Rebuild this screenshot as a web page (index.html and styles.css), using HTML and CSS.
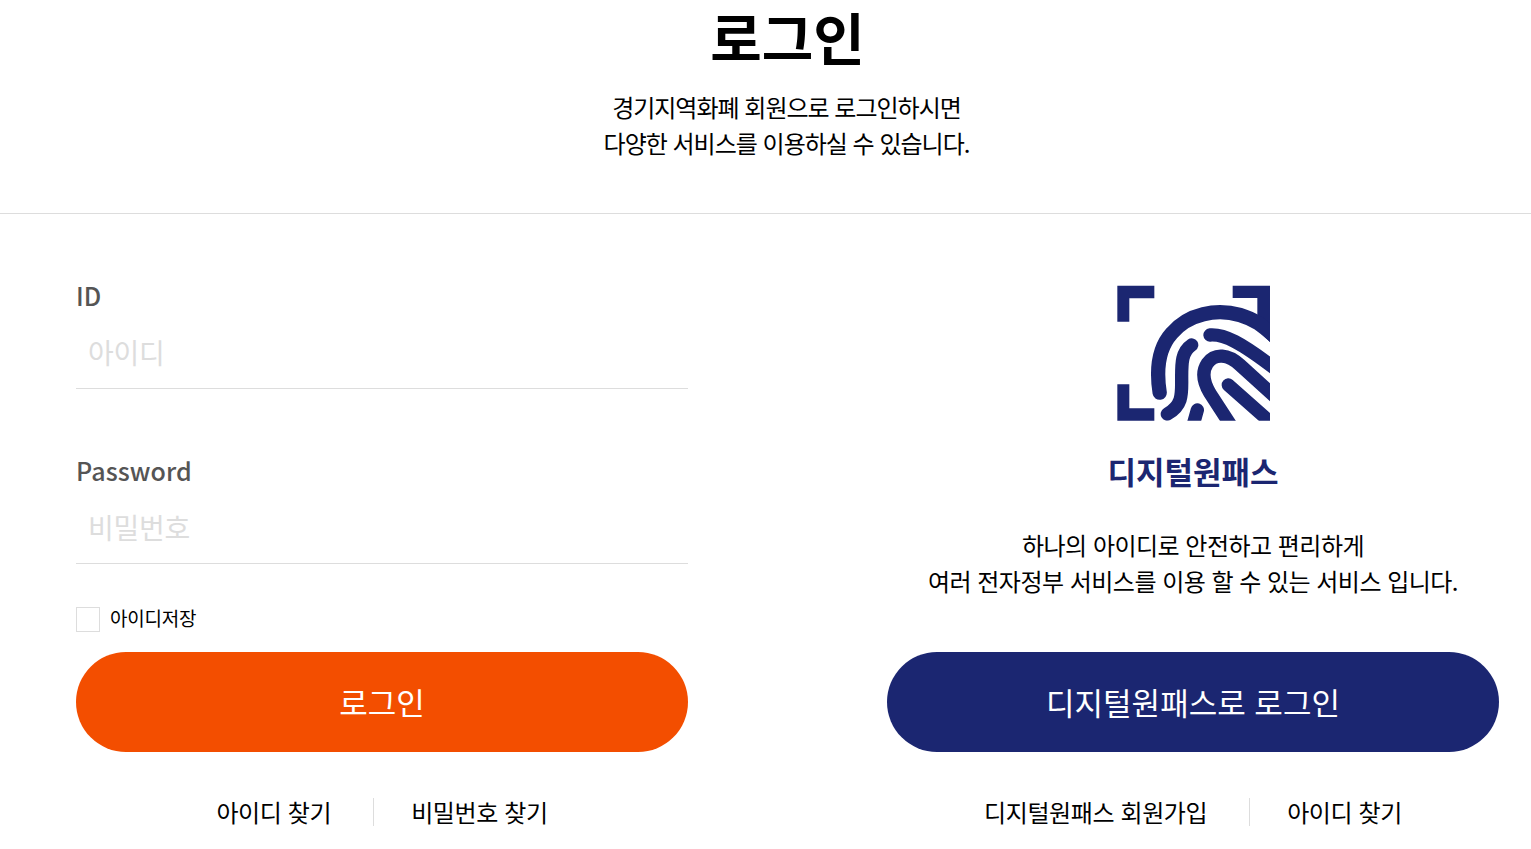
FILE: index.html
```html
<!DOCTYPE html>
<html lang="ko">
<head>
    <meta charset="UTF-8">
    <title>로그인</title>
    <link rel="stylesheet" href="styles.css">
</head>
<body>
    <div class="page">
        <!-- Title -->
        <div class="head">
            <h1>로그인</h1>
            <p>경기지역화폐 회원으로 로그인하시면<br>다양한 서비스를 이용하실 수 있습니다.</p>
        </div>

        <div class="columns">
            <!-- ID login -->
            <div class="col">
                <div class="form-area">
                    <div class="field">
                        <label for="userId">ID</label>
                        <input type="text" id="userId" placeholder="아이디">
                    </div>
                    <div class="field">
                        <label for="userPw">Password</label>
                        <input type="password" id="userPw" placeholder="비밀번호">
                    </div>
                    <label class="save-id">
                        <span class="check"></span>
                        <span class="save-text">아이디저장</span>
                    </label>
                </div>
                <button class="btn btn-orange">로그인</button>
                <div class="links">
                    <a href="#">아이디 찾기</a>
                    <a href="#">비밀번호 찾기</a>
                </div>
            </div>

            <!-- Digital One Pass -->
            <div class="col">
                <div class="form-area center">
                    <svg class="logo" viewBox="0 0 570 495" width="190" height="165">
                        <defs>
                            <clipPath id="logoClip"><rect x="40" y="40" width="470" height="412"/></clipPath>
                        </defs>
                        <g fill="#1b2671">
                            <path d="M52 47H163V85H88V155H52Z"/>
                            <path d="M52 343H88V415H163V452H52Z"/>
                            <path d="M398 47H510V216L472 180V84H398Z"/>
                        </g>
                        <g clip-path="url(#logoClip)" fill="none" stroke="#1b2671" stroke-width="40" stroke-linecap="round">
                            <path stroke-width="43" d="M179 368C170 310 170 240 215 190C265 130 350 115 420 135C470 150 490 170 530 205"/>
                            <path d="M330 195C372 192 420 215 530 300"/>
                            <path d="M275 225C245 245 245 280 245 320C245 370 250 405 202 432"/>
                            <path d="M530 385L420 285C385 253 345 248 322 280C302 310 315 345 330 370L395 470"/>
                            <path d="M385 345L530 473"/>
                            <path d="M292 420L278 470"/>
                        </g>
                    </svg>
                    <div class="logo-name">디지털원패스</div>
                    <p class="desc">하나의 아이디로 안전하고 편리하게<br>여러 전자정부 서비스를 이용 할 수 있는 서비스 입니다.</p>
                </div>
                <button class="btn btn-navy">디지털원패스로 로그인</button>
                <div class="links">
                    <a href="#">디지털원패스 회원가입</a>
                    <a href="#">아이디 찾기</a>
                </div>
            </div>
        </div>
    </div>
</body>
</html>
```

FILE: styles.css
```css
html, body {
    margin: 0;
    overflow: hidden;
}
body {
    font-family: "Noto Sans CJK KR", "Noto Sans", sans-serif;
    background-color: #ffffff;
    color: #000;
}
.page {
    width: 1575px;
}
.head {
    height: 213px;
    border-bottom: 1px solid #ddd;
    text-align: center;
}
.head h1 {
    margin: 0;
    font-size: 56px;
    line-height: 72px;
    font-weight: 700;
}
.head p {
    margin: 17px 2px 0 0;
    font-size: 24px;
    line-height: 36px;
    letter-spacing: -1px;
}
.columns {
    display: flex;
    justify-content: space-between;
    padding: 0 76px;
}
.col {
    width: 612px;
}
.form-area {
    height: 438px;
}
.form-area.center {
    text-align: center;
    padding-top: 56px;
    height: 382px;
}
.field {
    padding-top: 63px;
}
.field label {
    display: block;
    font-size: 25px;
    font-weight: 500;
    line-height: 36px;
    letter-spacing: 0.1px;
    color: #555;
}
.field input {
    display: block;
    box-sizing: border-box;
    width: 100%;
    height: 74px;
    margin-top: 2px;
    padding: 0 12px;
    border: none;
    border-bottom: 1px solid #ddd;
    outline: none;
    font-family: inherit;
    font-size: 28px;
    letter-spacing: -0.3px;
}
.field input::placeholder {
    color: #ddd;
}
.save-id {
    display: flex;
    align-items: flex-start;
    gap: 10px;
    margin-top: 43px;
    font-size: 19px;
    letter-spacing: -0.2px;
}
.save-text {
    line-height: 22px;
}
.check {
    box-sizing: border-box;
    width: 24px;
    height: 25px;
    border: 1px solid #ddd;
}
.logo {
    display: block;
    margin: 0 auto;
    transform: translateX(2px);
}
.logo-name {
    margin-top: 14px;
    font-size: 31px;
    line-height: 44px;
    font-weight: 700;
    color: #1b2671;
}
.desc {
    margin: 34px 0 0;
    font-size: 24px;
    line-height: 36px;
    letter-spacing: -0.52px;
}
.btn {
    display: block;
    width: 100%;
    height: 100px;
    padding-bottom: 2px;
    border: none;
    border-radius: 50px;
    color: #fff;
    font-family: inherit;
    font-size: 31px;
    cursor: pointer;
}
.btn-orange {
    background-color: #f34e00;
}
.btn-navy {
    background-color: #1b2671;
}
.links {
    display: flex;
    justify-content: center;
    margin-top: 46px;
}
.links a {
    padding: 0 42px 0 40px;
    font-size: 24px;
    line-height: 28px;
    letter-spacing: -0.4px;
    color: #000;
    text-decoration: none;
}
.links a + a {
    padding: 0 40px 0 37px;
    border-left: 1px solid #ddd;
}
```
